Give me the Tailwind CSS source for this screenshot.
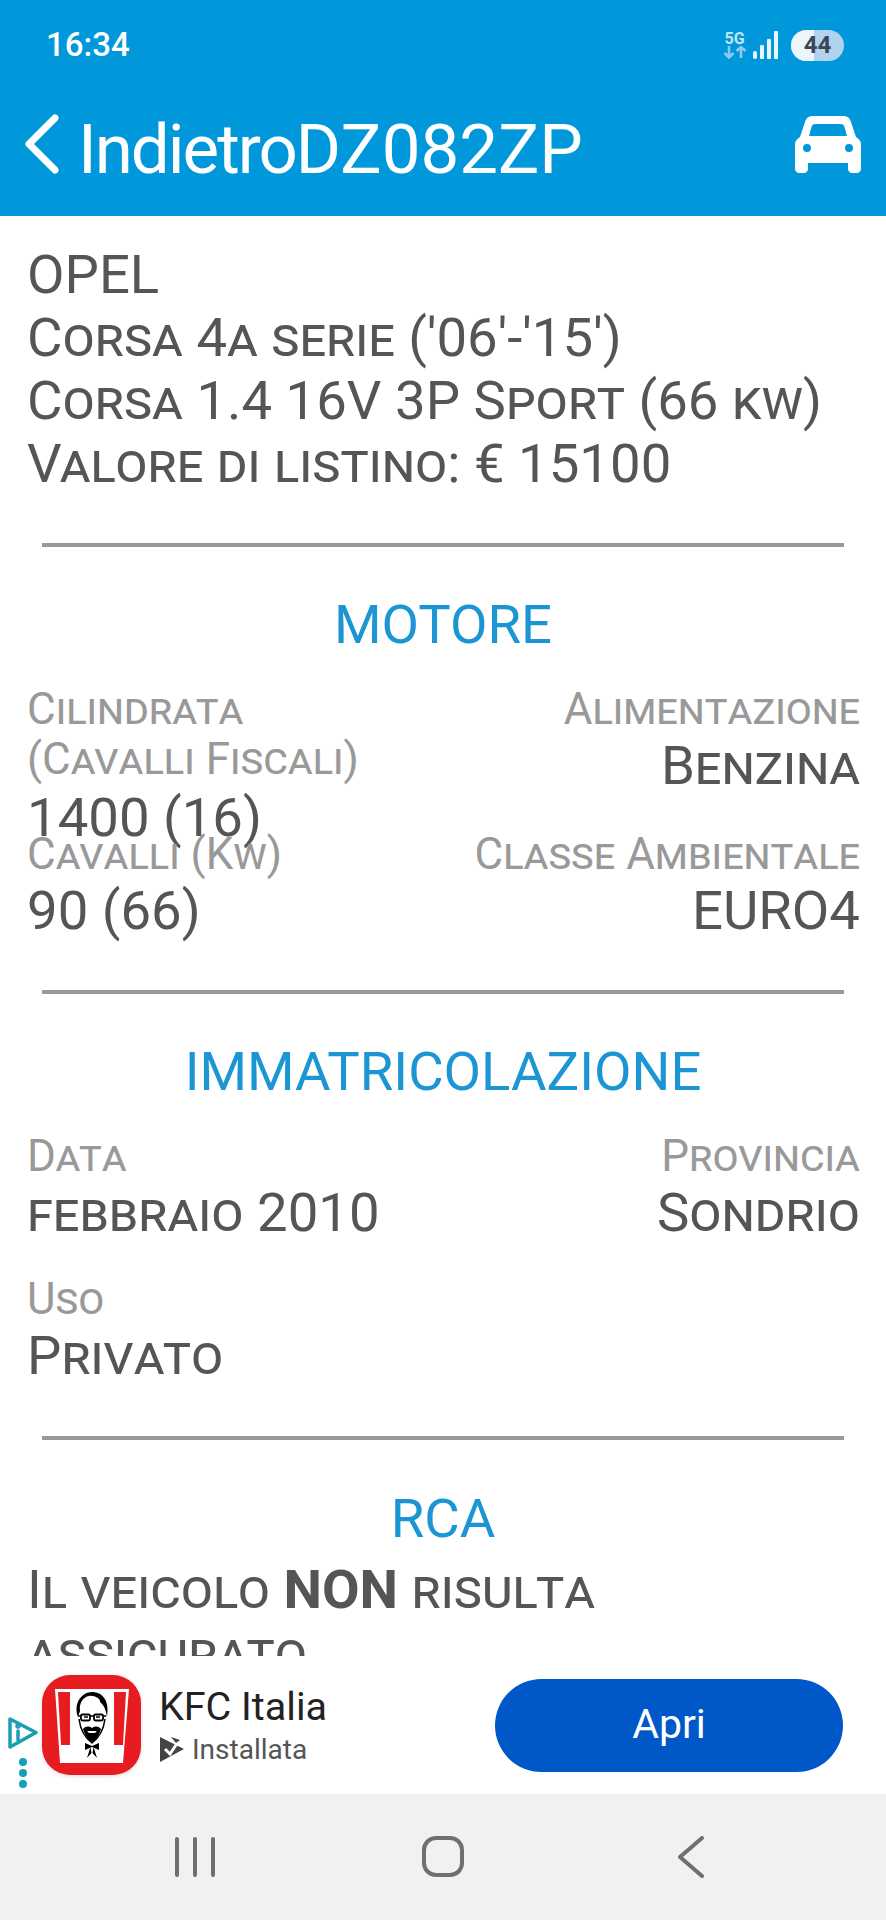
<!DOCTYPE html>
<html lang="it">
<head>
<meta charset="UTF-8">
<meta name="viewport" content="width=device-width, initial-scale=1.0">
<title>DZ082ZP</title>
<script src="https://cdn.jsdelivr.net/npm/@tailwindcss/browser@4"></script>
</head>
<body class="bg-white font-[Roboto,sans-serif]">
<div class="flex flex-col w-[886px] h-[1920px] overflow-hidden">

  <!-- header -->
  <header class="h-[216px] shrink-0 bg-[#0098da] text-white">
    <div class="flex items-center justify-between h-[90px] pl-[46px] pr-[42px]">
      <span class="text-[33px] font-medium">16:34</span>
      <div class="flex items-center">
        <div class="flex flex-col items-center w-[25px] text-[#c4e4f7]">
          <span class="text-[16px] leading-[15px] font-bold">5G</span>
          <svg width="24" height="13" viewBox="0 0 24 13" fill="none" stroke="#8ecbee" stroke-width="2.5"><path d="M6 0v11M1.500 7l4.500 4.500L10.500 7M18 12V1M13.500 5L18 1l4.500 4"/></svg>
        </div>
        <svg class="ml-[5px]" width="27" height="28" viewBox="0 0 27 28" fill="#e8f5fc"><rect x="1" y="20" width="4" height="8" rx="2"/><rect x="8" y="14" width="4" height="14" rx="1"/><rect x="15" y="8" width="4" height="20" rx="1"/><rect x="22" y="0" width="4" height="28" rx="1"/></svg>
        <div class="relative ml-[12px] w-[53px] h-[31px] rounded-full overflow-hidden bg-[#b0d3ee] flex items-center justify-center">
          <div class="absolute left-0 top-0 bottom-0 w-[23px] bg-[#eaf5fc]"></div>
          <span class="relative text-[24px] font-bold text-[#3c4655]">44</span>
        </div>
      </div>
    </div>
    <div class="flex items-center justify-between h-[100px] pl-[24px] pr-[25px] pt-[8px]">
      <div class="flex items-center">
        <svg width="36" height="60" viewBox="0 0 36 60" fill="none" stroke="white" stroke-width="7" stroke-linecap="round" stroke-linejoin="round"><path d="M31 4L5 30l26 26"/></svg>
        <span class="ml-[18px] pt-[10px] text-[69px] leading-none tracking-[-2px]">Indietro</span>
        <span class="pt-[10px] text-[69px] leading-none">DZ082ZP</span>
      </div>
      <svg width="66" height="57" viewBox="0 0 66 57" fill="white"><path fill-rule="evenodd" d="M18 0h30c4 0 7 2 8 6L61 21c3 2 5 4 5 7v25c0 2-2 4-4 4h-5c-2 0-4-2-4-4v-6H13v6c0 2-2 4-4 4H4c-2 0-4-2-4-4V28c0-3 2-5 5-7L10 6c1-4 4-6 8-6zM20 8c-2 0-3 1-3.500 3L14 20h38l-2.500-9c-.5-2-1.500-3-3.500-3zM12 28a4 4 0 1 0 0 8a4 4 0 0 0 0-8zM54 28a4 4 0 1 0 0 8a4 4 0 0 0 0-8z"/></svg>
    </div>
  </header>

  <!-- content -->
  <main class="flex-1 overflow-hidden text-[#555] text-[54.5px] leading-[63px] [font-variant:small-caps]">
    <div class="px-[27px] pt-[27px]">
      <div>OPEL</div>
      <div>Corsa 4a serie ('06'-'15')</div>
      <div>Corsa 1.4 16V 3P Sport (66 kw)</div>
      <div>Valore di listino: € 15100</div>
    </div>

    <hr class="mx-[42px] mt-[48px] border-0 h-[4px] bg-[#999]">
    <h2 class="mt-[46px] text-center text-[#1c95d4] text-[54.5px] leading-[63px]">MOTORE</h2>
    <div class="grid grid-cols-2 auto-rows-[145px_143px] pl-[27px] pr-[26px] mt-[28px]">
      <div>
        <div class="text-[#999] text-[44px] leading-[50px]">Cilindrata<br>(Cavalli Fiscali)</div>
        <div class="mt-[2px]">1400 (16)</div>
      </div>
      <div class="text-right">
        <div class="text-[#999] text-[44px] leading-[50px]">Alimentazione</div>
        <div>Benzina</div>
      </div>
      <div>
        <div class="text-[#999] text-[44px] leading-[50px]">Cavalli (Kw)</div>
        <div>90 (66)</div>
      </div>
      <div class="text-right">
        <div class="text-[#999] text-[44px] leading-[50px]">Classe Ambientale</div>
        <div>EURO4</div>
      </div>
    </div>

    <hr class="mx-[42px] mt-[18px] border-0 h-[4px] bg-[#999]">
    <h2 class="mt-[46px] text-center text-[#1c95d4] text-[54.5px] leading-[63px]">IMMATRICOLAZIONE</h2>
    <div class="grid grid-cols-2 auto-rows-[143px] pl-[27px] pr-[26px] mt-[28px]">
      <div>
        <div class="text-[#999] text-[44px] leading-[50px]">Data</div>
        <div>febbraio 2010</div>
      </div>
      <div class="text-right">
        <div class="text-[#999] text-[44px] leading-[50px]">Provincia</div>
        <div>Sondrio</div>
      </div>
      <div>
        <div class="text-[#999] text-[44px] leading-[50px]">Uso</div>
        <div>Privato</div>
      </div>
    </div>

    <hr class="mx-[42px] mt-[19px] border-0 h-[4px] bg-[#999]">
    <h2 class="mt-[47px] text-center text-[#1c95d4] text-[54.5px] leading-[63px]">RCA</h2>
    <p class="px-[27px] mt-[8px]">Il veicolo <b class="font-bold">NON</b> risulta assicurato</p>
  </main>

  <!-- ad -->
  <section class="relative h-[138px] shrink-0 bg-white flex items-center pl-[42px] pr-[43px]">
    <div class="absolute left-[7px] top-[60px] flex flex-col items-center w-[31px]">
      <svg width="31" height="33" viewBox="0 0 31 33" fill="none" stroke="#1a9db5" stroke-width="3.500" stroke-linejoin="round" stroke-linecap="round"><path d="M3 3L29 16.500L3 31Z"/><path d="M11 15v9"/><circle cx="11" cy="10" r="1" fill="#1a9db5"/></svg>
      <div class="mt-[9px] flex flex-col gap-[3px]">
        <span class="block w-[8px] h-[8px] rounded-full bg-[#12a0b5]"></span>
        <span class="block w-[8px] h-[8px] rounded-full bg-[#12a0b5]"></span>
        <span class="block w-[8px] h-[8px] rounded-full bg-[#12a0b5]"></span>
      </div>
    </div>

    <!-- KFC app icon -->
    <svg class="relative shrink-0 drop-shadow-sm" width="99" height="100" viewBox="0 0 99 100">
      <rect width="99" height="100" rx="28" fill="#e61c20"/>
      <path d="M13 14H87L81 88H18Z" fill="white"/>
      <path d="M16 17H28V70H19ZM72 17H84L81 70H72Z" fill="#e61c20"/>
      <!-- face -->
      <path d="M35 40C32 26 41 18 50 18C60 18 68 26 65 40C64 44 63 47 62 50C60 59 55 66 50 68C45 66 40 59 38 50C37 47 36 44 35 40Z" fill="white"/>
      <path d="M36 42C31 28 40 17 50 17C60 17 68 25 65 42C64 35 62 30 58 27C59 24 52 20 47 21C41 22 37 28 38 36Z" fill="black"/>
      <path d="M43 25C48 24 54 26 57 30C61 33 62 37 62 40L58 36C52 34 46 33 41 35C40 31 41 27 43 25Z" fill="white"/>
      <path d="M37 44C38 52 42 62 50 68C58 62 62 52 63 44" fill="none" stroke="black" stroke-width="1.500"/>
      <path d="M36 41H64" stroke="black" stroke-width="1.500"/>
      <rect x="39" y="39.500" width="9" height="6" rx="1.500" fill="white" stroke="black" stroke-width="1.800"/>
      <rect x="52" y="39.500" width="9" height="6" rx="1.500" fill="white" stroke="black" stroke-width="1.800"/>
      <path d="M42 42h4M54 42h4" stroke="black" stroke-width="1.500"/>
      <path d="M41 54C44 51 47 51 50 53C53 51 56 51 59 54C57 60 54 66 50 67C46 66 43 60 41 54Z" fill="black"/>
      <path d="M45 56H55L53 58H47Z" fill="white"/>
      <path d="M43 68L50 71L57 68V75L50 72L43 75ZM48.500 72L45 83L49.500 78ZM51.500 72L55 83L50.500 78Z" fill="black"/>
    </svg>

    <div class="ml-[18px] flex flex-col">
      <span class="text-[39.500px] leading-[44px] text-[#222]">KFC Italia</span>
      <div class="flex items-center mt-[5px]">
        <svg width="26" height="27" viewBox="0 0 26 27"><path d="M1 1L25 13L1 26Z" fill="#444"/><path d="M6 13l5 5 10-15" fill="none" stroke="white" stroke-width="3"/><path d="M12 1l9 3-4 3z" fill="#444"/></svg>
        <span class="ml-[7px] text-[28px] leading-[32px] text-[#555]">Installata</span>
      </div>
    </div>

    <button class="ml-auto w-[348px] h-[93px] rounded-full bg-[#0057c8] text-white text-[41px]">Apri</button>
  </section>

  <!-- android nav -->
  <nav class="h-[126px] shrink-0 bg-[#f0f1f3] grid grid-cols-3 items-center px-[71px]">
    <div class="flex justify-center gap-[14px] -mt-[1px]">
      <span class="block w-[4px] h-[40px] bg-[#6f6f6f] rounded"></span>
      <span class="block w-[4px] h-[40px] bg-[#6f6f6f] rounded"></span>
      <span class="block w-[4px] h-[40px] bg-[#6f6f6f] rounded"></span>
    </div>
    <div class="flex justify-center -mt-[1px]">
      <span class="block w-[42px] h-[41px] border-[4px] border-[#6f6f6f] rounded-[14px]"></span>
    </div>
    <div class="flex justify-center -mt-[1px]">
      <svg width="28" height="42" viewBox="0 0 28 42" fill="none" stroke="#6f6f6f" stroke-width="4" stroke-linecap="round" stroke-linejoin="round"><path d="M25 2L3 21l22 19"/></svg>
    </div>
  </nav>
</div>
</body>
</html>
